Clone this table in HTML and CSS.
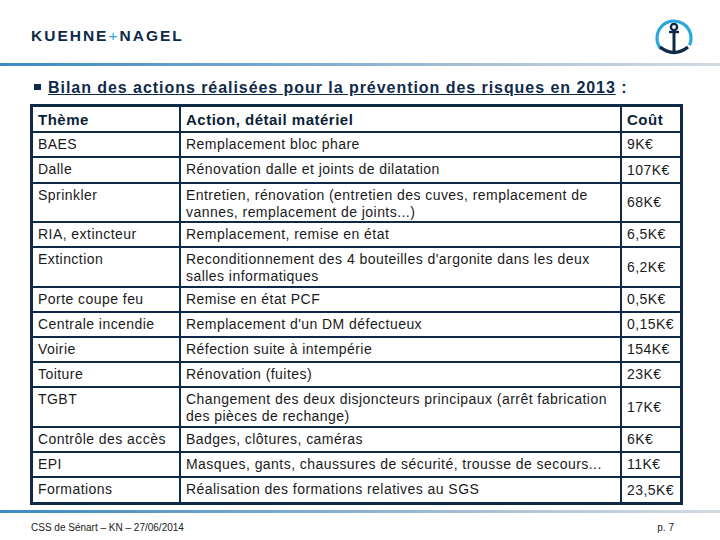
FILE: index.html
```html
<!DOCTYPE html>
<html lang="fr">
<head>
<meta charset="utf-8">
<title>Bilan des actions</title>
<link rel="stylesheet" href="styles.css">
</head>
<body>
<div class="page">
  <header class="header">
    <div class="logo">KUEHNE<span class="plus">+</span>NAGEL</div>
    <svg class="anchor" width="48" height="42" viewBox="0 0 48 42">
      <path d="M10.98 32.93 A17 17 0 1 1 39.41 29.18" fill="none" stroke="#2aa7df" stroke-width="3.2"/>
      <circle cx="24" cy="11" r="3.1" fill="none" stroke="#0e2a47" stroke-width="2.4"/>
      <line x1="19" y1="16" x2="29" y2="16" stroke="#0e2a47" stroke-width="2.4"/>
      <line x1="24" y1="14" x2="24" y2="36" stroke="#0e2a47" stroke-width="3"/>
      <path d="M10 31 Q24 42 38 31" fill="none" stroke="#0e2a47" stroke-width="3.4"/>
    </svg>
  </header>
  <div class="rule"></div>
  <h1 class="title"><span class="bullet"></span><span><u>Bilan des actions réalisées pour la prévention des risques en 2013</u> :</span></h1>
  <table class="grid">
    <colgroup><col class="c1"><col class="c2"><col class="c3"></colgroup>
    <tr class="head h26"><th>Thème</th><th>Action, détail matériel</th><th class="cost">Coût</th></tr>
    <tr class="h25"><td>BAES</td><td>Remplacement bloc phare</td><td class="cost">9K€</td></tr>
    <tr class="h26"><td>Dalle</td><td>Rénovation dalle et joints de dilatation</td><td class="cost">107K€</td></tr>
    <tr class="h39"><td>Sprinkler</td><td>Entretien, rénovation (entretien des cuves, remplacement de vannes, remplacement de joints...)</td><td class="cost">68K€</td></tr>
    <tr class="h25"><td>RIA, extincteur</td><td>Remplacement, remise en état</td><td class="cost">6,5K€</td></tr>
    <tr class="h40"><td>Extinction</td><td>Reconditionnement des 4 bouteilles d'argonite dans les deux salles informatiques</td><td class="cost">6,2K€</td></tr>
    <tr class="h25"><td>Porte coupe feu</td><td>Remise en état PCF</td><td class="cost">0,5K€</td></tr>
    <tr class="h25"><td>Centrale incendie</td><td>Remplacement d'un DM défectueux</td><td class="cost">0,15K€</td></tr>
    <tr class="h25"><td>Voirie</td><td>Réfection suite à intempérie</td><td class="cost">154K€</td></tr>
    <tr class="h25"><td>Toiture</td><td>Rénovation (fuites)</td><td class="cost">23K€</td></tr>
    <tr class="h40"><td>TGBT</td><td>Changement des deux disjoncteurs principaux (arrêt fabrication des pièces de rechange)</td><td class="cost">17K€</td></tr>
    <tr class="h25"><td>Contrôle des accès</td><td>Badges, clôtures, caméras</td><td class="cost">6K€</td></tr>
    <tr class="h25"><td>EPI</td><td>Masques, gants, chaussures de sécurité, trousse de secours...</td><td class="cost">11K€</td></tr>
    <tr class="h24 last"><td>Formations</td><td>Réalisation des formations relatives au SGS</td><td class="cost">23,5K€</td></tr>
  </table>
  <div class="rule rule-bottom"></div>
  <footer class="footer">
    <span>CSS de Sénart – KN – 27/06/2014</span>
    <span>p. 7</span>
  </footer>
</div>
</body>
</html>
```

FILE: styles.css
```css
html, body {
  margin: 0;
  padding: 0;
  background: #ffffff;
}

.page {
  width: 720px;
  height: 540px;
  overflow: hidden;
  font-family: "Liberation Sans", Arial, sans-serif;
  color: #1a1a1a;
}

.header {
  display: flex;
  justify-content: space-between;
  align-items: flex-start;
  height: 63px;
  padding: 0 22px 0 31px;
  box-sizing: border-box;
}

.logo {
  margin-top: 28px;
  font-size: 15.5px;
  line-height: 15.5px;
  font-weight: bold;
  letter-spacing: 2px;
  color: #0e2a47;
}

.logo .plus {
  color: #2aa7df;
  font-weight: normal;
}

.anchor {
  display: block;
  margin-top: 16px;
}

.rule {
  height: 3px;
  background: linear-gradient(to right, #3a8ac1 0%, #7aaacf 40%, #b6c7d7 75%, #d3dbe2 100%);
}

.title {
  display: flex;
  align-items: flex-start;
  margin: 14px 0 0 0;
  padding-left: 34px;
  font-size: 16px;
  line-height: 16px;
  font-weight: bold;
  letter-spacing: 0.95px;
  color: #0f2b4b;
}

.bullet {
  display: block;
  width: 7px;
  height: 6px;
  margin: 4px 7px 0 0;
  background: #0f2b4b;
}

.grid {
  margin: 8px 0 0 30px;
  width: 653px;
  table-layout: fixed;
  border: 3px solid #0e2a47;
  border-collapse: separate;
  border-spacing: 0;
  font-size: 14px;
  line-height: 17px;
  letter-spacing: 0.45px;
}

.c1 { width: 148px; }
.c2 { width: 441px; }
.c3 { width: 58px; }

.grid th,
.grid td {
  border-right: 2px solid #0e2a47;
  border-bottom: 2px solid #0e2a47;
  padding: 3px 4px 0 5px;
  vertical-align: top;
  text-align: left;
}

.grid th {
  font-size: 15px;
  font-weight: bold;
  letter-spacing: 0.5px;
  color: #0c1f38;
  vertical-align: middle;
  padding-top: 0;
}

.grid .cost {
  border-right: none;
  vertical-align: middle;
  padding-top: 0;
  padding-right: 0;
}

.grid .last td {
  border-bottom: none;
}

.h24 { height: 24px; }
.h25 { height: 25px; }
.h26 { height: 26px; }
.h39 { height: 39px; }
.h40 { height: 40px; }

.rule-bottom {
  margin-top: 5px;
}

.footer {
  display: flex;
  justify-content: space-between;
  margin-top: 9px;
  padding: 0 46px 0 31px;
  font-size: 10px;
  line-height: 12px;
  color: #222;
}
```
